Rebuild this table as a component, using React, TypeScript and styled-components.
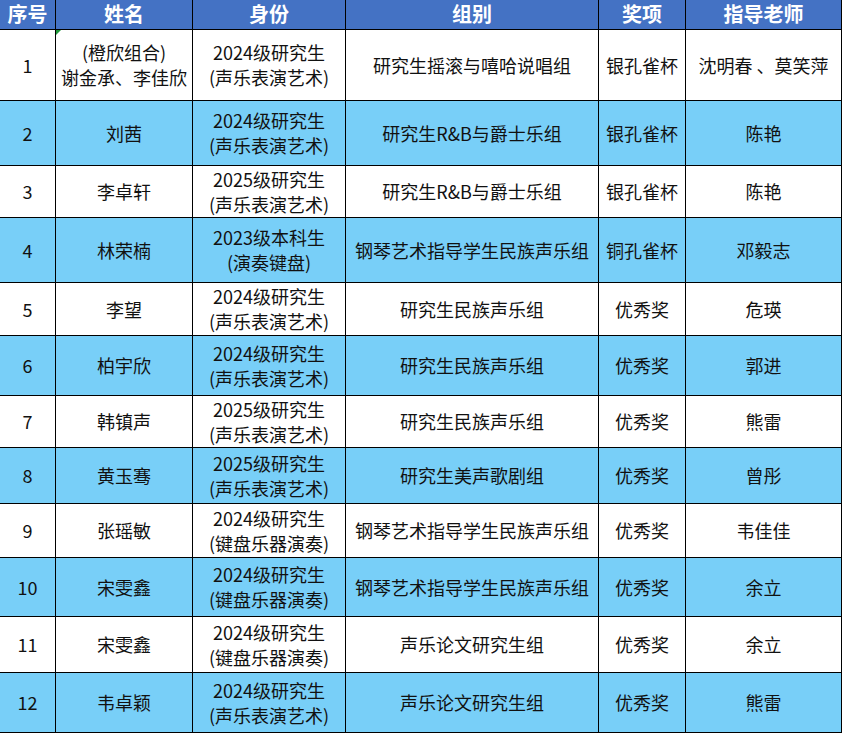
import { FC } from 'react';
import styled, { createGlobalStyle } from 'styled-components';

const GlobalStyle = createGlobalStyle`
  html, body {
    margin: 0;
    padding: 0;
    background: #ffffff;
  }
  body {
    font-family: 'Noto Sans CJK SC', 'Noto Sans', sans-serif;
  }
`;

const COLUMNS = '56px 137px 153px 253px 87px 156px';

type Entry = {
  no: number;
  name: string[];
  identity: string[];
  group: string;
  award: string;
  teacher: string;
  height: number;
  flagged?: boolean;
};

const GRAD_VOCAL = ['2024级研究生', '(声乐表演艺术)'];
const GRAD_VOCAL_25 = ['2025级研究生', '(声乐表演艺术)'];
const GRAD_KEYS = ['2024级研究生', '(键盘乐器演奏)'];

const ROWS: Entry[] = [
  { no: 1, name: ['(橙欣组合)', '谢金承、李佳欣'], identity: GRAD_VOCAL, group: '研究生摇滚与嘻哈说唱组', award: '银孔雀杯', teacher: '沈明春 、莫笑萍', height: 71, flagged: true },
  { no: 2, name: ['刘茜'], identity: GRAD_VOCAL, group: '研究生R&B与爵士乐组', award: '银孔雀杯', teacher: '陈艳', height: 65 },
  { no: 3, name: ['李卓轩'], identity: GRAD_VOCAL_25, group: '研究生R&B与爵士乐组', award: '银孔雀杯', teacher: '陈艳', height: 52 },
  { no: 4, name: ['林荣楠'], identity: ['2023级本科生', '(演奏键盘)'], group: '钢琴艺术指导学生民族声乐组', award: '铜孔雀杯', teacher: '邓毅志', height: 65 },
  { no: 5, name: ['李望'], identity: GRAD_VOCAL, group: '研究生民族声乐组', award: '优秀奖', teacher: '危瑛', height: 53 },
  { no: 6, name: ['柏宇欣'], identity: GRAD_VOCAL, group: '研究生民族声乐组', award: '优秀奖', teacher: '郭进', height: 60 },
  { no: 7, name: ['韩镇声'], identity: GRAD_VOCAL_25, group: '研究生民族声乐组', award: '优秀奖', teacher: '熊雷', height: 52 },
  { no: 8, name: ['黄玉骞'], identity: GRAD_VOCAL_25, group: '研究生美声歌剧组', award: '优秀奖', teacher: '曾彤', height: 56 },
  { no: 9, name: ['张瑶敏'], identity: GRAD_KEYS, group: '钢琴艺术指导学生民族声乐组', award: '优秀奖', teacher: '韦佳佳', height: 54 },
  { no: 10, name: ['宋雯鑫'], identity: GRAD_KEYS, group: '钢琴艺术指导学生民族声乐组', award: '优秀奖', teacher: '余立', height: 59 },
  { no: 11, name: ['宋雯鑫'], identity: GRAD_KEYS, group: '声乐论文研究生组', award: '优秀奖', teacher: '余立', height: 56 },
  { no: 12, name: ['韦卓颖'], identity: GRAD_VOCAL, group: '声乐论文研究生组', award: '优秀奖', teacher: '熊雷', height: 60 },
];

const HEADERS = ['序号', '姓名', '身份', '组别', '奖项', '指导老师'];

const Lines: FC<{ lines: string[] }> = ({ lines }) => (
  <>
    {lines.map((line, i) => (
      <Line key={i}>{line}</Line>
    ))}
  </>
);

const App: FC = () => {
  return (
    <>
      <GlobalStyle />
      <Sheet>
        <HeadRow>
          {HEADERS.map((h) => (
            <HeadCell key={h}>{h}</HeadCell>
          ))}
        </HeadRow>
        {ROWS.map((r) => (
          <Row key={r.no} $alt={r.no % 2 === 0} $h={r.height}>
            <Cell>{r.no}</Cell>
            <Cell $flag={r.flagged}>
              <Lines lines={r.name} />
            </Cell>
            <Cell>
              <Lines lines={r.identity} />
            </Cell>
            <Cell>{r.group}</Cell>
            <Cell>{r.award}</Cell>
            <Cell>{r.teacher}</Cell>
          </Row>
        ))}
      </Sheet>
    </>
  );
};

export default App;

const Sheet = styled.div`
  width: 842px;
  display: flex;
  flex-direction: column;
`;

const HeadRow = styled.div`
  display: grid;
  grid-template-columns: ${COLUMNS};
  height: 30px;
  background: #4472c4;
`;

const HeadCell = styled.div`
  box-sizing: border-box;
  border-right: 1px solid #000;
  border-bottom: 1px solid #000;
  display: flex;
  align-items: center;
  justify-content: center;
  color: #ffffff;
  font-size: 20px;
  font-weight: 700;
  line-height: 1;
  padding-bottom: 1px;
`;

const Row = styled.div<{ $alt: boolean; $h: number }>`
  display: grid;
  grid-template-columns: ${COLUMNS};
  height: ${(p) => p.$h}px;
  background: ${(p) => (p.$alt ? '#78cff8' : '#ffffff')};
`;

const Cell = styled.div<{ $flag?: boolean }>`
  position: relative;
  box-sizing: border-box;
  border-right: 1px solid #000;
  border-bottom: 1px solid #000;
  display: flex;
  flex-direction: column;
  align-items: center;
  justify-content: center;
  color: #111;
  font-size: 18px;
  line-height: 25px;
  white-space: nowrap;
  text-align: center;

  &::before {
    content: '';
    display: ${(p) => (p.$flag ? 'block' : 'none')};
    position: absolute;
    top: 0;
    left: 0;
    width: 0;
    height: 0;
    border-top: 5px solid #1f9a3a;
    border-right: 5px solid transparent;
  }
`;

const Line = styled.span`
  display: block;
`;
